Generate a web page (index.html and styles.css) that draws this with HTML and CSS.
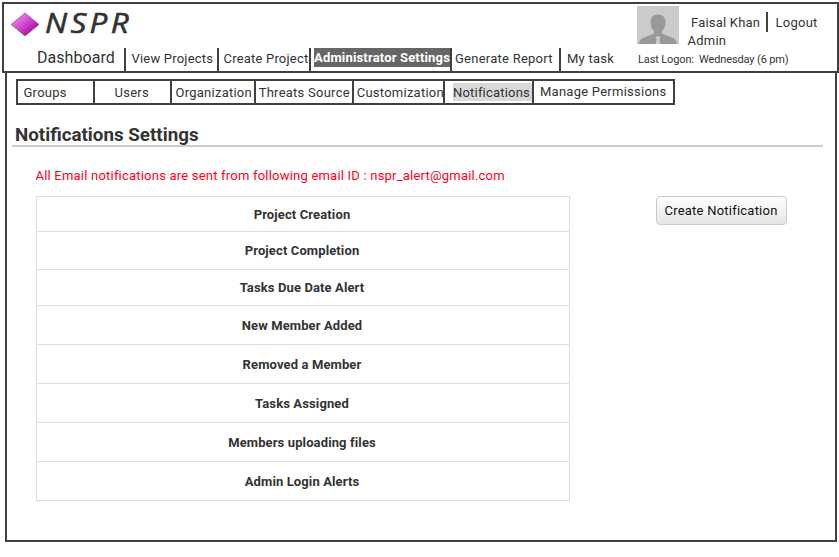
FILE: index.html
```html
<!DOCTYPE html>
<html lang="en">
<head>
<meta charset="utf-8">
<title>NSPR - Notifications Settings</title>
<link rel="stylesheet" href="styles.css">
</head>
<body>
<header class="header">
  <div class="header-main">
    <div class="brand">
      <svg class="logo" width="30" height="25" viewBox="0 0 30 25">
        <defs><linearGradient id="gem" x1="0" y1="0" x2="1" y2="1"><stop offset=".2" stop-color="#ee78ea"/><stop offset=".5" stop-color="#cf45cd"/><stop offset=".85" stop-color="#9c0a9c"/></linearGradient></defs>
        <path d="M1 12.5 15 1 29 12.5 15 24Z" fill="url(#gem)" stroke="#85618a" stroke-width=".8"/>
      </svg>
      <span class="brand-name">NSPR</span>
    </div>
    <nav class="nav">
      <a class="dashboard"><span>Dashboard</span></a>
      <a class="projects"><span>View Projects</span></a>
      <a class="create"><span>Create Project</span></a>
      <a class="admin"><span>Administrator Settings</span></a>
      <a class="report"><span>Generate Report</span></a>
      <a class="task"><span>My task</span></a>
    </nav>
  </div>
  <div class="account">
    <div class="account-top">
      <svg class="avatar" width="42" height="38" viewBox="0 0 42 38">
        <path fill="#cbcbcb" d="M0 0h42v38H0z"/>
        <path fill="#999" d="M21 8.500c5 0 7.500 3 7.500 8 0 4-1.500 6.500-3.500 8.500v2.500c3 2 9 3 12 5 2 1.300 3 3 3 5.500H2c0-2.500 1-4.200 3-5.500 3-2 9-3 12-5V25c-2-2-3.500-4.500-3.500-8.500 0-5 2.500-8 7.500-8Z"/>
        <path fill="#cbcbcb" d="m18.500 31 2.500-1 2.500 1-1 2.500 1 4.500h-5l1-4.500Z"/>
      </svg>
      <div class="user"><span class="user-name">Faisal Khan</span><span class="role">Admin</span></div>
      <a class="logout">Logout</a>
    </div>
    <div class="logon">Last Logon:&nbsp; Wednesday (6 pm)</div>
  </div>
</header>
<main class="panel">
  <nav class="tabs">
    <a><span class="t1">Groups</span></a>
    <a><span class="t2">Users</span></a>
    <a><span class="t3">Organization</span></a>
    <a><span class="t4">Threats Source</span></a>
    <a><span class="t5">Customization</span></a>
    <a class="current"><span class="t6">Notifications</span></a>
    <a><span class="t7">Manage Permissions</span></a>
  </nav>
  <h1><span>Notifications Settings</span></h1>
  <p class="notice"><span>All Email notifications are sent from following email ID : nspr_alert@gmail.com</span></p>
  <div class="content">
    <ul class="list">
      <li><span>Project Creation</span></li>
      <li><span>Project Completion</span></li>
      <li><span>Tasks Due Date Alert</span></li>
      <li><span>New Member Added</span></li>
      <li><span>Removed a Member</span></li>
      <li><span>Tasks Assigned</span></li>
      <li><span>Members uploading files</span></li>
      <li><span>Admin Login Alerts</span></li>
    </ul>
    <button class="button">Create Notification</button>
  </div>
</main>
</body>
</html>
```
FILE: styles.css
```css
* { box-sizing: border-box; }
body { margin: 0; padding: 2px 0 0 2px; height: 557px; overflow: hidden; background: #fff; font: 13px/16px Roboto, sans-serif; letter-spacing: .25px; color: #333; }
.header { width: 837px; height: 71px; border: 2px solid #404040; display: flex; }
.header-main { width: 633px; }
.brand { display: flex; height: 44px; padding: 8px 0 0 6px; }
.brand-name { font: italic 28px/30px "Open Sans", sans-serif; letter-spacing: 3px; margin: -5px 0 0 5px; color: #333; -webkit-text-stroke: .6px #333; transform: scaleX(1.12); transform-origin: left; }
.nav { display: flex; height: 23px; }
.nav a { white-space: nowrap; height: 23px; padding-top: 3px; border-right: 2px solid #404040; }
.nav .dashboard { width: 122px; padding: 2px 0 0 33px; font-size: 16px; letter-spacing: .05px; }
.nav .projects { width: 93px; padding-left: 5.500px; letter-spacing: .2px; }
.nav .create { width: 92px; padding-left: 4.500px; letter-spacing: .2px; }
.nav .admin { width: 141px; padding: 0 0 0 3px; font-weight: 700; color: #fff; letter-spacing: .17px; }
.admin span { display: block; height: 19px; line-height: 19px; background: #666; }
.nav .report { width: 109px; padding-left: 3px; }
.nav .task { padding-left: 6px; border: 0; }
.account { width: 200px; }
.account-top { display: flex; height: 44px; padding-top: 2px; }
.user { width: 87px; padding: 8px 0 0 8px; display: flex; flex-direction: column; line-height: 18px; }
.user-name { margin-left: 4px; white-space: nowrap; letter-spacing: .2px; }
.role { margin-left: .5px; }
.logout { height: 20px; margin-top: 6px; padding-left: 7.500px; border-left: 2px solid #404040; line-height: 22px; }
.logon { padding: 4px 0 0 1px; font-size: 11px; letter-spacing: -.13px; white-space: nowrap; }
.panel { width: 832px; height: 469px; margin-left: 3px; border: 2px solid #404040; border-top: 0; padding: 6px 0 0 5px; }
.tabs { display: grid; grid-template-columns: 77px 77px 84px 98px 91px 89px 139px; width: 659px; height: 26px; margin-left: 4px; border: 2px solid #404040; }
.tabs a { border-right: 2px solid #404040; padding: 2px 0 0 5px; white-space: nowrap; line-height: 20px; }
.tabs a:last-child { border: 0; padding-left: 6px; }
.t1 { margin-left: .5px; }
.t2 { margin-left: 14.500px; }
.t4, .t5 { margin-left: -2.300px; }
.t3 { margin-left: -1.500px; }
.tabs .current { padding-left: 8px; }
.t6 { display: block; background: #d9d9d9; height: 18px; letter-spacing: .2px; }
.t7 { position: relative; top: -1px; }
h1 { margin: 17px 0 0; width: 811px; height: 25px; padding-left: 3px; border-bottom: 2px solid #ccc; font: 700 18.8px/27px Roboto, sans-serif; letter-spacing: 0; }
.notice { margin: 21px 0 0 23.500px; color: #ff0019; letter-spacing: .21px; }
.content { display: flex; align-items: flex-start; margin: 12px 0 0 24px; }
.list { width: 534px; height: 305px; margin: 0; padding: 0; list-style: none; border: 1px solid #ddd; display: grid; grid-template-rows: 35px 38px 36px 39px 39px 39px 39px 38px; font-weight: 700; letter-spacing: .12px; }
.list li { border-bottom: 1px solid #ddd; display: flex; align-items: center; justify-content: center; padding: 2px 2px 0 0; }
.list li:nth-child(2), .list li:nth-child(3) { padding-top: 0; }
.list li:last-child { border: 0; }
.button { width: 131px; height: 29px; margin-left: 86px; padding: 0 1px 0 0; border: 1px solid #ccc; border-radius: 4px; background: linear-gradient(#fff, #e5e5e5); font: 13px/16px Roboto, sans-serif; letter-spacing: .23px; color: #111; }
```
